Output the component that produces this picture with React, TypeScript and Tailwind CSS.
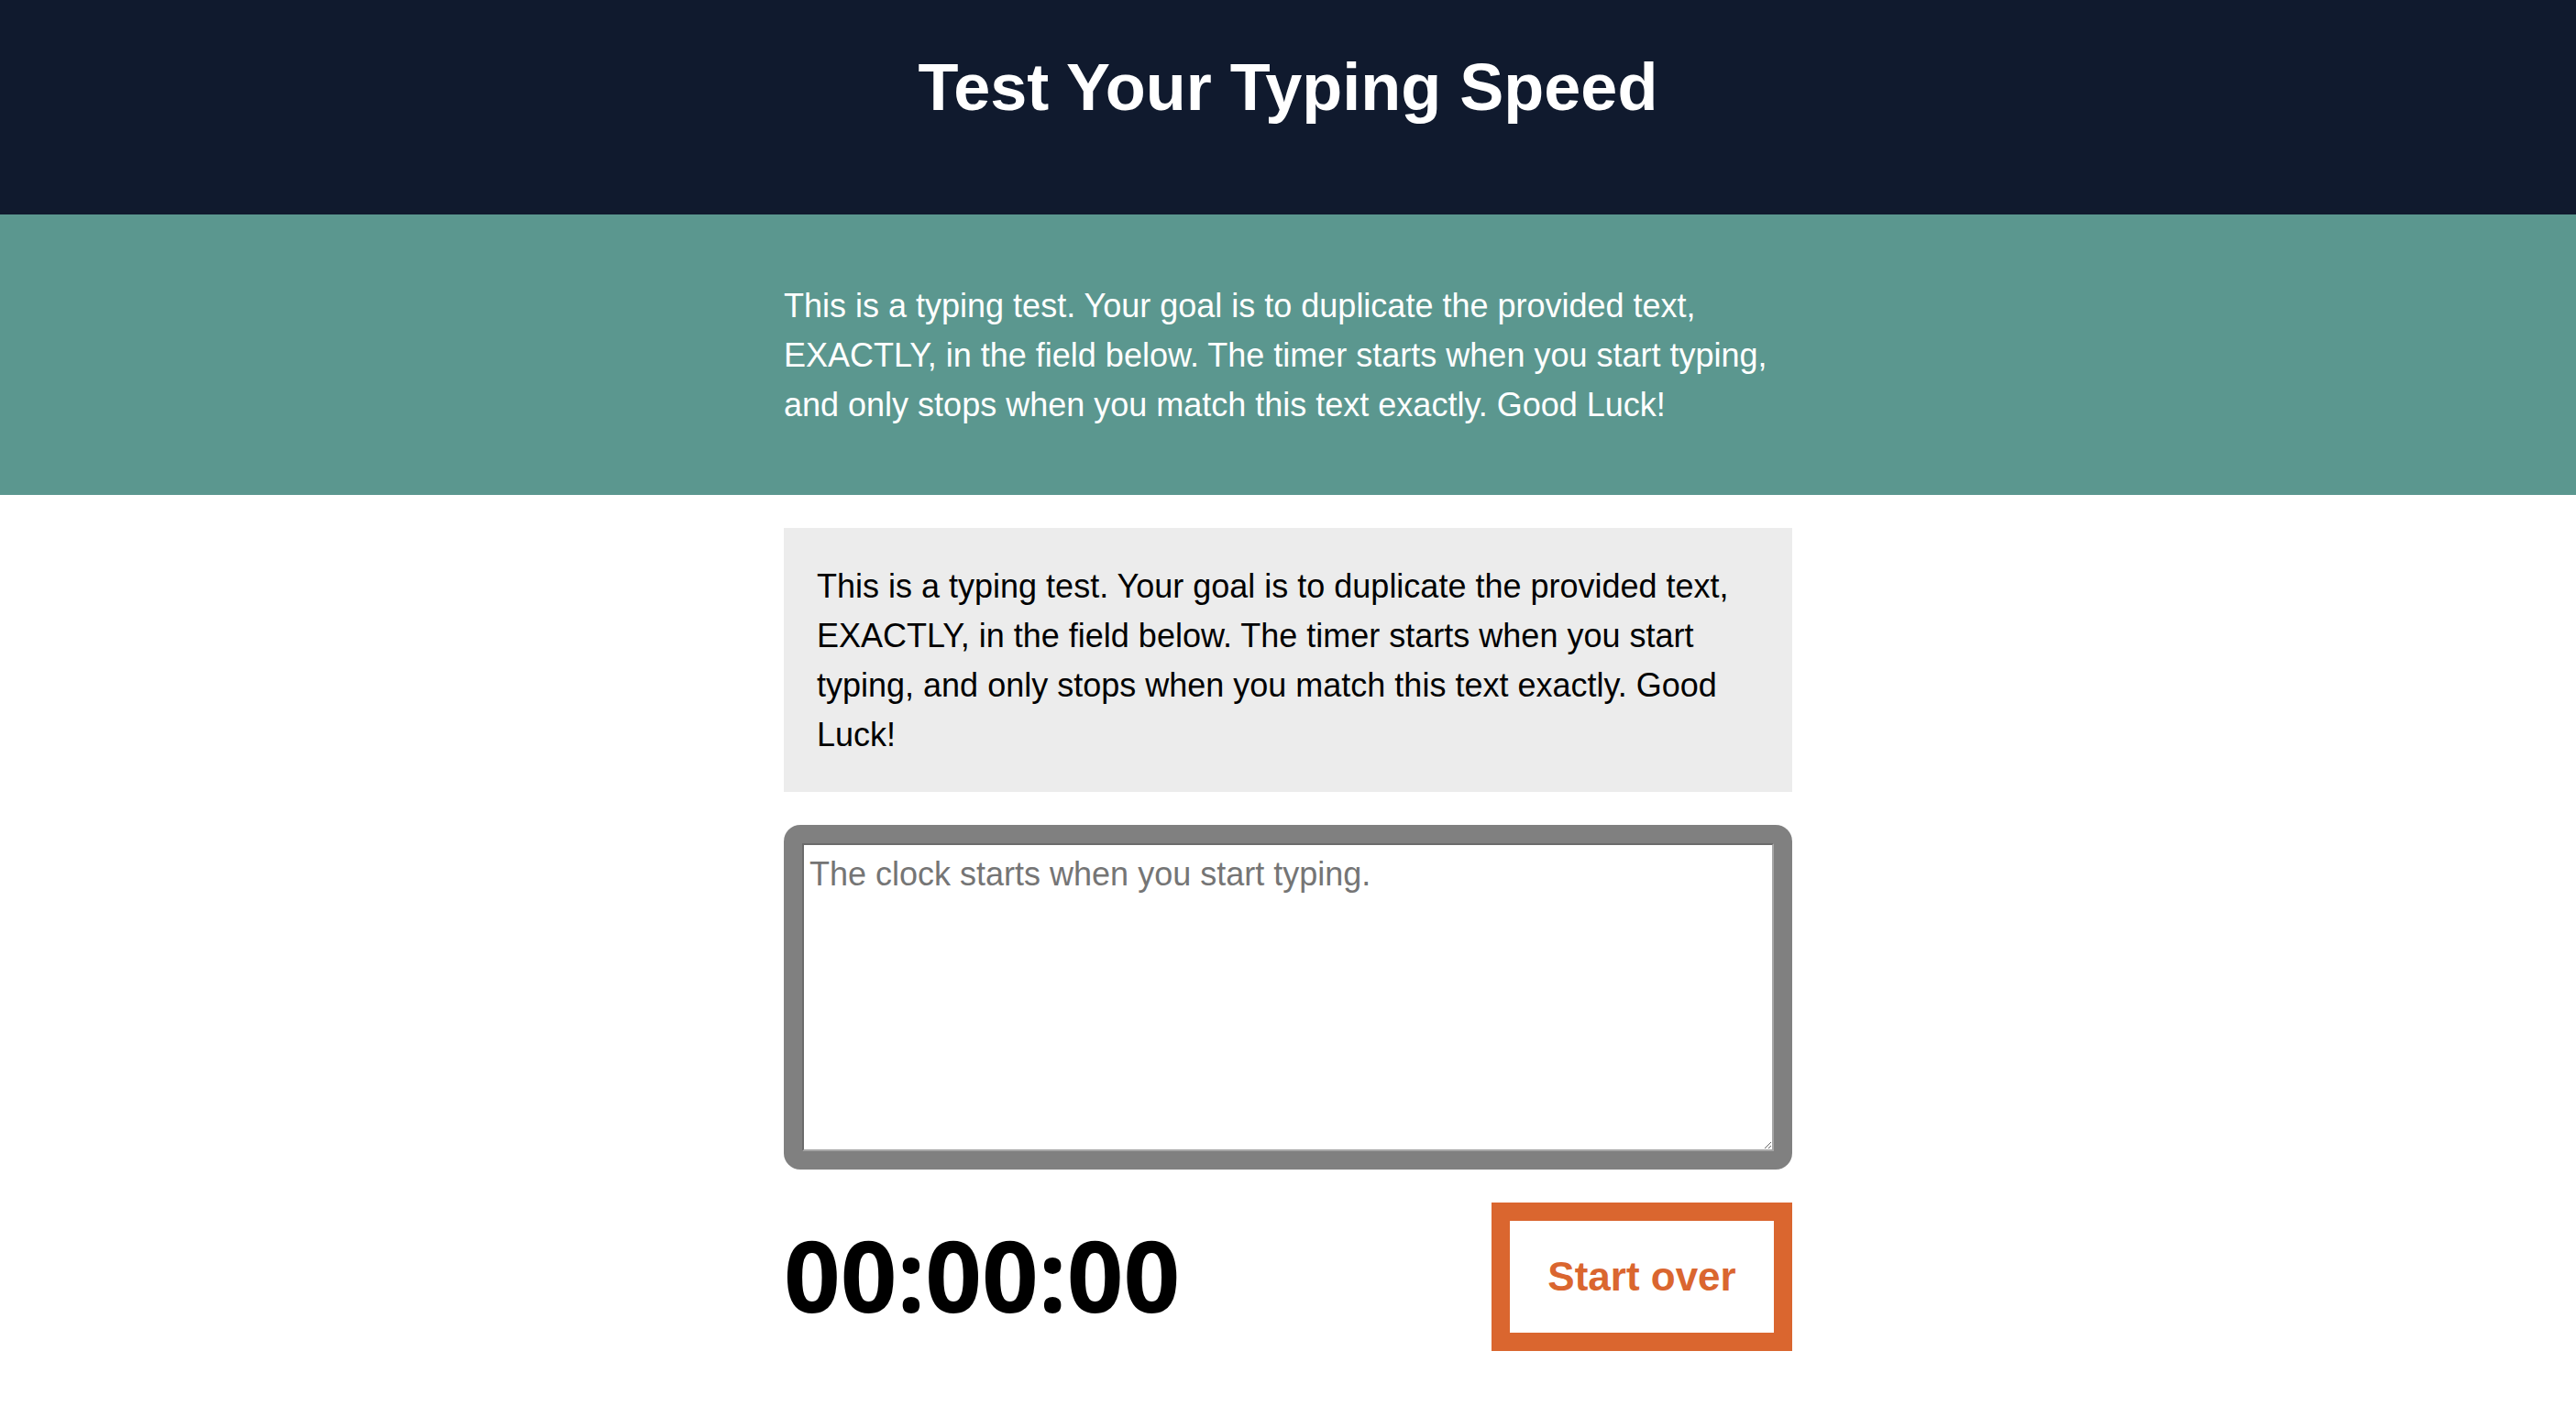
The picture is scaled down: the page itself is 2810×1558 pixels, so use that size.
import { useEffect, useState } from 'react'

const intro =
  'This is a typing test. Your goal is to duplicate the provided text, EXACTLY, in the field below. The timer starts when you start typing, and only stops when you match this text exactly. Good Luck!'

function pad(n: number) {
  return n < 10 ? `0${n}` : `${n}`
}

export default function App() {
  const [text, setText] = useState('')
  const [started, setStarted] = useState(false)
  const [ticks, setTicks] = useState(0)

  const done = text === intro

  useEffect(() => {
    if (!started || done) return
    const id = setInterval(() => setTicks((t) => t + 1), 10)
    return () => clearInterval(id)
  }, [started, done])

  const minutes = Math.floor(ticks / 6000)
  const seconds = Math.floor((ticks / 100) % 60)
  const hundredths = ticks % 100

  const reset = () => {
    setText('')
    setStarted(false)
    setTicks(0)
  }

  return (
    <div className="min-h-screen bg-white font-['Liberation_Sans',Arial,sans-serif]">
      <header className="h-[234px] bg-[#101a2e] pt-[53px]">
        <h1 className="text-center text-[72px] font-bold leading-[84px] text-white">Test Your Typing Speed</h1>
      </header>

      <section className="bg-[#5b978f] pt-[73px] pb-[71px]">
        <p className="mx-auto w-[1100px] text-[36px] leading-[54px] text-white">{intro}</p>
      </section>

      <main className="mx-auto flex w-[1100px] flex-col gap-[36px] pt-[36px] pb-[72px]">
        <div className="bg-[#ececec] px-[36px] pt-[37px] pb-[35px]">
          <p className="text-[36px] leading-[54px] text-black">{intro}</p>
        </div>

        <div className="rounded-[18px] bg-[#808080] p-[20px]">
          <textarea
            value={text}
            onChange={(e) => {
              setText(e.target.value)
              if (!started) setStarted(true)
            }}
            placeholder="The clock starts when you start typing."
            className="block h-[336px] w-full border-2 border-t-[#6b6b6b] border-l-[#6b6b6b] border-r-[#a6a6a6] border-b-[#a6a6a6] bg-white px-[6px] pt-[5px] text-[36px] text-black outline-none placeholder:text-[#757575]"
          />
        </div>

        <div className="flex items-center justify-between">
          <div className="-mt-[4px] font-['Open_Sans',sans-serif] text-[108px] font-bold leading-none text-black">
            {pad(minutes)}:{pad(seconds)}:{pad(hundredths)}
          </div>
          <button
            onClick={reset}
            className="h-[162px] w-[328px] border-[20px] border-[#da662f] bg-white text-[44px] font-bold text-[#da662f]"
          >
            Start over
          </button>
        </div>
      </main>
    </div>
  )
}
